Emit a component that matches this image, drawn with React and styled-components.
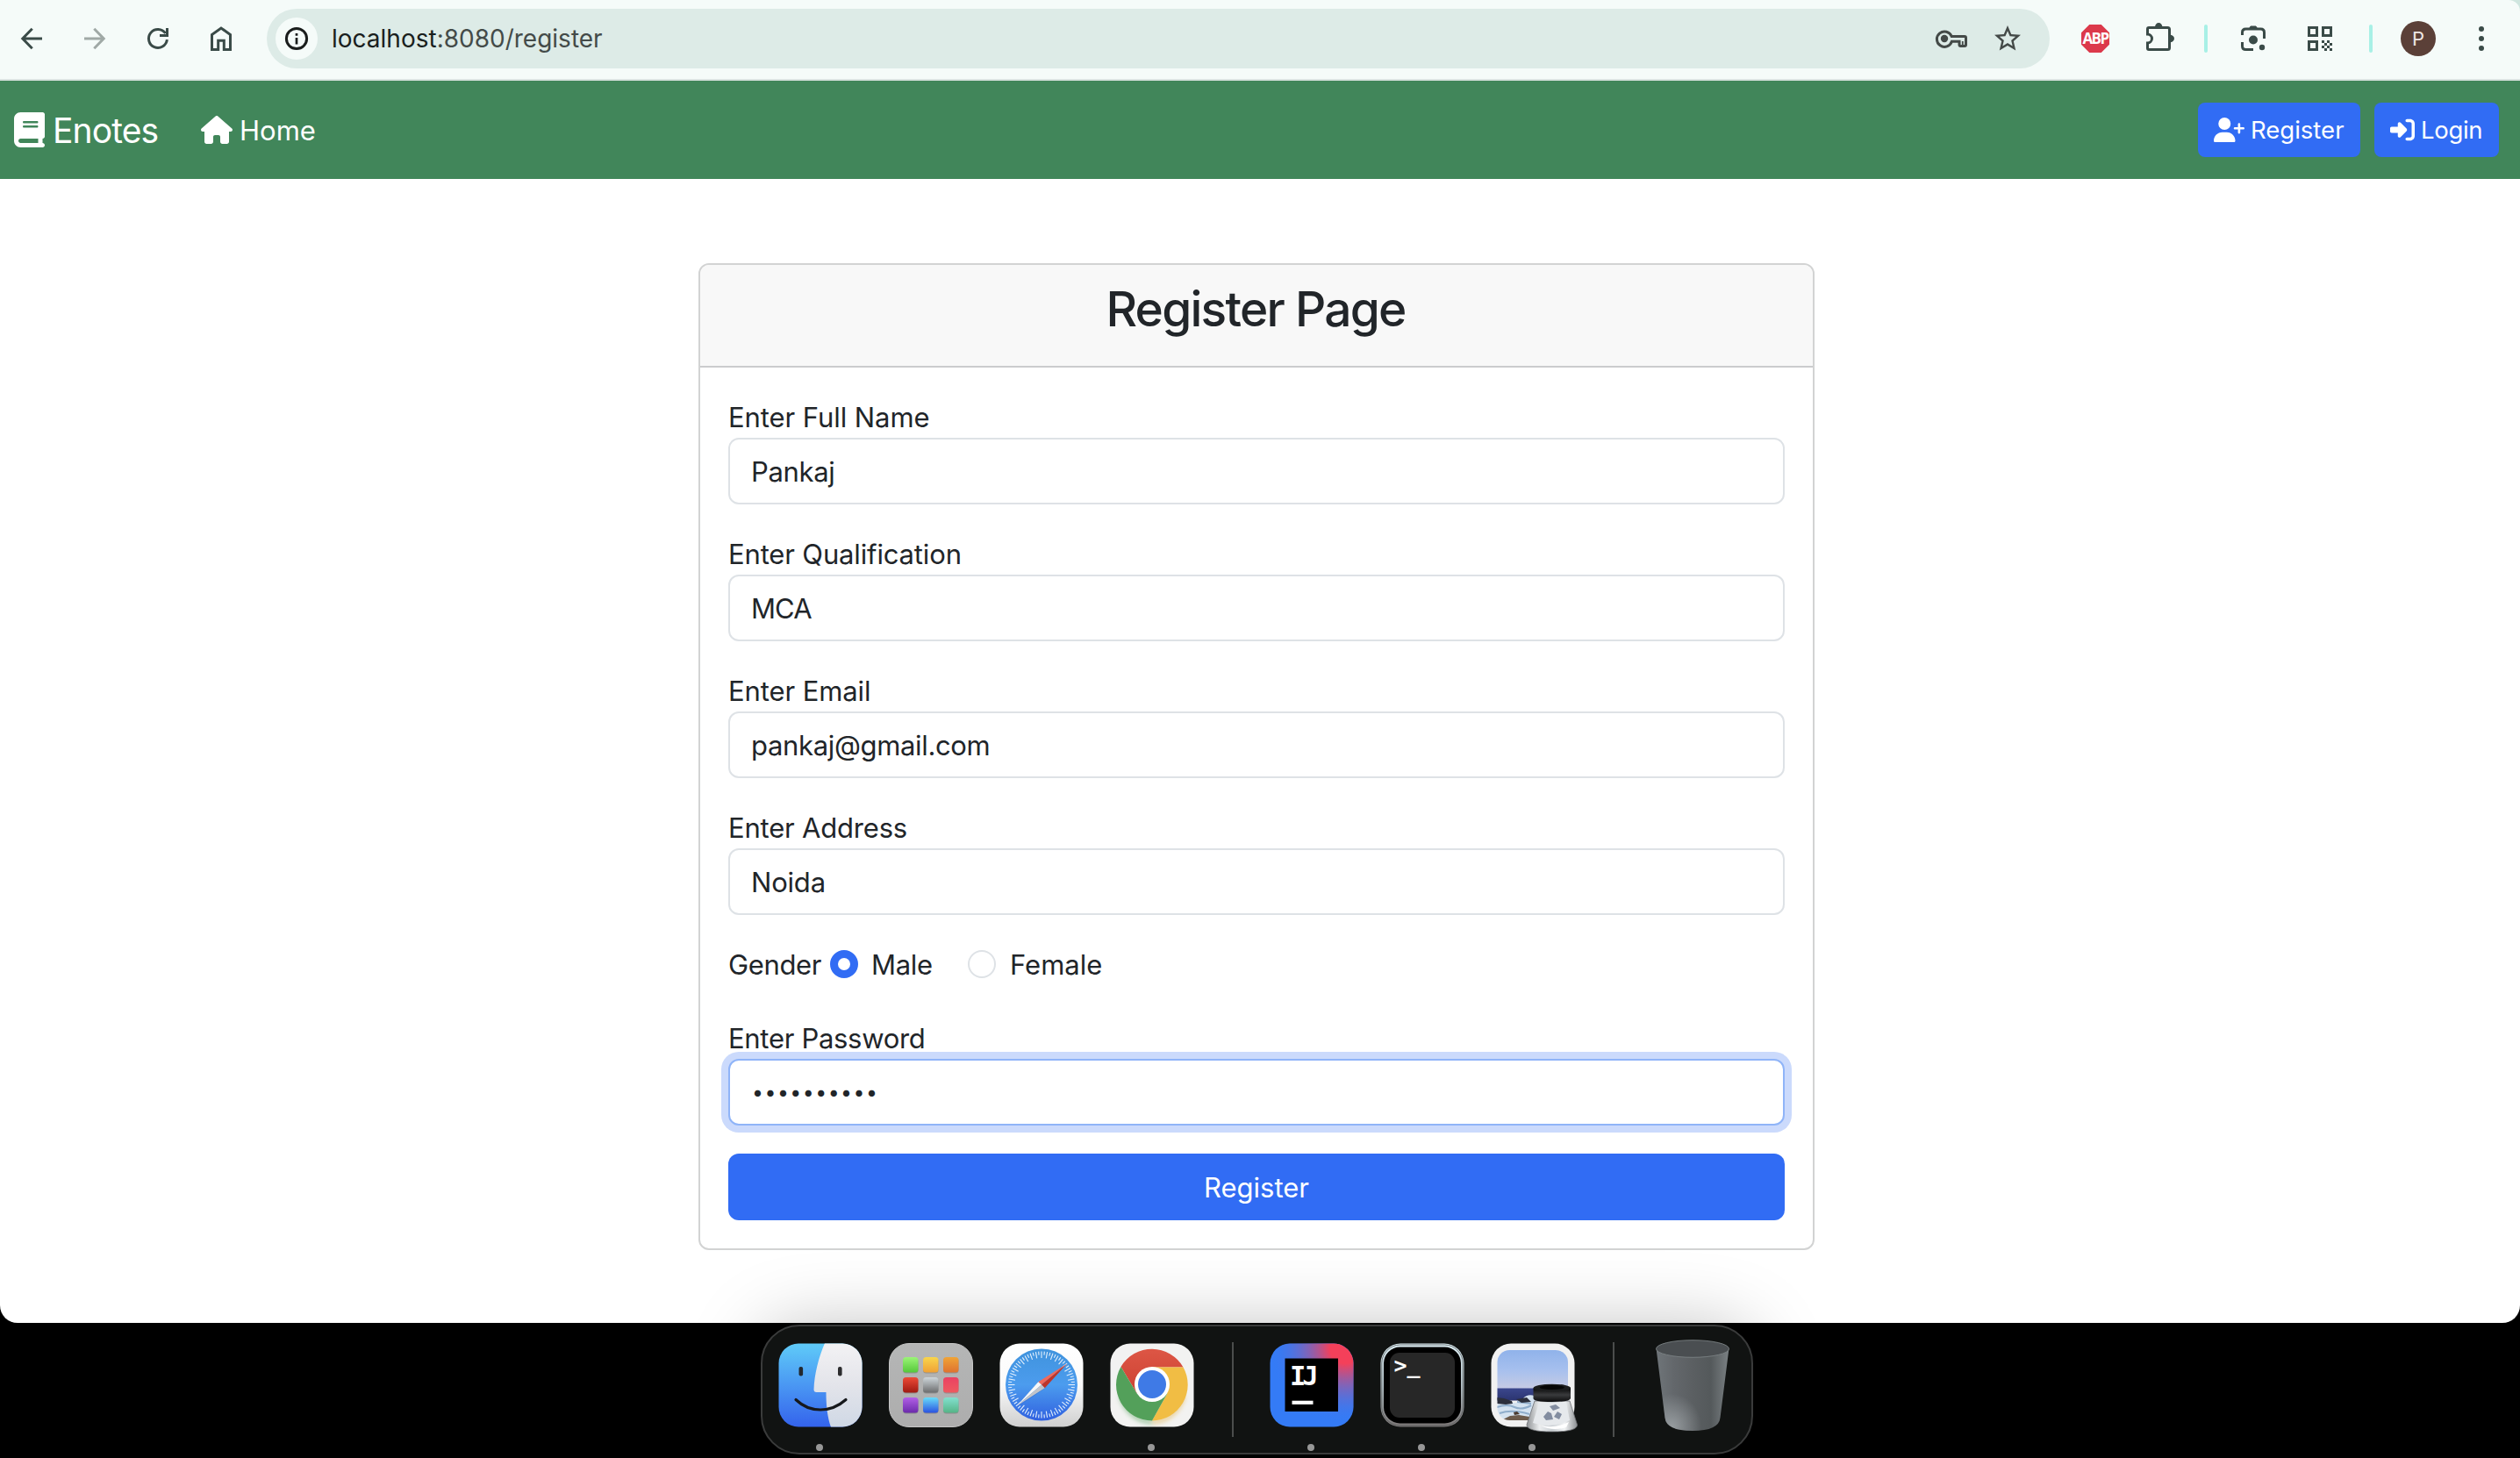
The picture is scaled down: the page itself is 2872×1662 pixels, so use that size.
import React from "react";
import styled, { createGlobalStyle } from "styled-components";
import { FaBook, FaHouse, FaUserPlus, FaRightToBracket } from "react-icons/fa6";
import { MdStarBorder } from "react-icons/md";

const Global = createGlobalStyle`
  *, *::before, *::after { box-sizing: border-box; }
  body { margin: 0; background: #000; font-family: Inter, "Liberation Sans", sans-serif; }
  svg { display: block; flex: none; overflow: visible; }
`;

const Desktop = styled.div`
  width: 2872px;
  height: 1662px;
  display: flex;
  flex-direction: column;
  background: #000;
  overflow: hidden;
`;

const Window = styled.div`
  height: 1508px;
  flex: none;
  display: flex;
  flex-direction: column;
  background: #fff;
  border-radius: 0 0 20px 20px;
  overflow: hidden;
`;

/* Browser toolbar */
const ToolbarFrame = styled.div`
  background: #cfe6df;
  flex: none;
`;
const Toolbar = styled.div`
  height: 92px;
  display: flex;
  align-items: center;
  padding-left: 16px;
  padding-bottom: 2px;
  background: #f5fbf9;
  border-bottom: 2px solid #dbe4e1;
  border-radius: 0 13px 0 0;
  color: #3a4b48;
`;
const NavButtons = styled.div`
  display: flex;
  gap: 32px;
  margin-right: 32px;
`;
const AddressBar = styled.div`
  width: 2032px;
  height: 68px;
  display: flex;
  align-items: center;
  padding: 0 30px 0 10px;
  border-radius: 34px;
  background: #ddebe7;
  color: #444a48;
`;
const SiteInfo = styled.div`
  width: 48px;
  height: 48px;
  display: grid;
  place-items: center;
  border-radius: 50%;
  background: #f5fbf9;
  color: #1a1d1c;
`;
const Url = styled.div`
  flex: 1;
  margin-left: 16px;
  font-size: 28px;
  line-height: 48px;
  color: #444b49;
  b { font-weight: 400; color: #1a1f1e; }
`;
const Slot = styled.div`
  margin-left: ${(p) => p.$ml}px;
  flex: none;
`;
const Divider = styled(Slot)`
  width: 4px;
  height: 32px;
  border-radius: 2px;
  background: #a8f0e6;
`;
const Avatar = styled(Slot)`
  width: 40px;
  height: 40px;
  border-radius: 50%;
  background: #5b4038;
  color: #eee7e4;
  font-size: 22px;
  line-height: 40px;
  text-align: center;
`;
const Abp = styled(Slot)`
  width: 32px;
  height: 32px;
  background: #dc394b;
  clip-path: polygon(29% 0, 71% 0, 100% 29%, 100% 71%, 71% 100%, 29% 100%, 0 71%, 0 29%);
  color: #fff;
  font: 700 17px/32px "Open Sans", "Noto Sans", sans-serif;
  letter-spacing: -1.6px;
  text-align: center;
`;

/* Site navbar */
const Navbar = styled.nav`
  height: 112px;
  flex: none;
  display: flex;
  align-items: center;
  padding: 0 24px 0 16px;
  background: #41865a;
  color: #fff;
`;
const Brand = styled.div`
  display: flex;
  align-items: center;
  gap: 9px;
  width: 213px;
  font-size: 39px;
  line-height: 60px;
  letter-spacing: -0.9px;
`;
const BookGlyph = styled(FaBook)`
  width: 35px;
  height: 40px;
`;
const HouseGlyph = styled(FaHouse)`
  width: 36px;
  height: 32px;
`;
const UserPlusGlyph = styled(FaUserPlus)`
  width: 35px;
  height: 28px;
`;
const NavText = styled.span`
  padding-top: 2px;
`;
const NavLink = styled.div`
  flex: 1;
  display: flex;
  align-items: center;
  gap: 8px;
  font-size: 31px;
  line-height: 48px;
`;
const NavButton = styled.button`
  height: 62px;
  width: ${(p) => p.$w}px;
  display: flex;
  align-items: center;
  gap: 7px;
  margin-left: 16px;
  padding: 0 0 0 18px;
  border: 0;
  border-radius: 8px;
  background: #316cf4;
  color: #fff;
  font: 400 27.5px/42px Inter, sans-serif;
  letter-spacing: ${(p) => p.$track || 0}px;
`;

/* Registration form */
const Content = styled.main`
  flex: 1;
  padding: 96px 0 0 796px;
`;
const Card = styled.section`
  width: 1272px;
  border: 2px solid #d2d3d3;
  border-radius: 12px;
  background: #fff;
  overflow: hidden;
  color: #212529;
`;
const CardHeader = styled.header`
  height: 117px;
  padding: 17px 2px 0 0;
  border-bottom: 2px solid #cbcccd;
  background: #f8f8f8;
`;
const Title = styled.h3`
  margin: 0;
  font-size: 55px;
  line-height: 67px;
  font-weight: 500;
  letter-spacing: -1.75px;
  text-align: center;
`;
const CardBody = styled.form`
  padding: 32px;
`;
const Field = styled.div`
  margin-bottom: 32px;
  display: flex;
  flex-direction: column;
`;
const Label = styled.label`
  padding-top: 2px;
  font-size: 31px;
  line-height: 46px;
  letter-spacing: ${(p) => p.$track || 0}px;
`;
const Input = styled.input`
  height: 76px;
  padding: 0 24px;
  border: 2px solid ${(p) => (p.$active ? "#8fb4f8" : "#dee2e6")};
  border-radius: 12px;
  outline: none;
  background: #fff;
  color: #212529;
  font: 400 31px/48px Inter, sans-serif;
  letter-spacing: ${(p) => p.$track || 0}px;
  box-shadow: ${(p) => (p.$active ? "0 0 0 8px #cbdafc" : "none")};
  &[type="password"] { font-size: 23px; letter-spacing: 1.5px; padding-left: 25px; }
`;
const GenderRow = styled.div`
  display: flex;
  align-items: center;
  height: 48px;
  margin-bottom: 36px;
`;
const GenderName = styled(Label)`
  width: 116px;
`;
const Choice = styled.label`
  display: flex;
  align-items: center;
  gap: ${(p) => p.$gap || 16}px;
  width: 157px;
  font-size: 31px;
  line-height: 46px;
  letter-spacing: ${(p) => p.$track || 0}px;
`;
const Radio = styled.span`
  width: 32px;
  height: 32px;
  flex: none;
  border-radius: 50%;
  background: #fff;
  border: ${(p) => (p.$checked ? "9px solid #316cf4" : "2px solid #dee2e6")};
`;
const Submit = styled.button`
  width: 100%;
  height: 76px;
  display: block;
  padding: 1px 0 0;
  border: 0;
  border-radius: 12px;
  background: #316cf4;
  color: #fff;
  font: 400 31px/48px Inter, sans-serif;
`;

/* Dock */
const DockArea = styled.div`
  flex: 1;
  padding: 2px 0 0 867px;
`;
const Dock = styled.div`
  position: relative;
  width: 1131px;
  height: 148px;
  display: flex;
  gap: 30px;
  padding: 19px 0 0 18px;
  border: 2px solid #3a3b3b;
  border-radius: 44px;
  background: #111312;
  box-shadow: 0 0 0 1px #000, 0 4px 84px rgba(0, 0, 0, 0.26);
`;
const DockItem = styled.div`
  display: flex;
  flex-direction: column;
  align-items: center;
  gap: 19px;
  width: ${(p) => p.$w || 96}px;
  margin: ${(p) => p.$m || 0};
`;
const RunningDot = styled.span`
  width: 8px;
  height: 8px;
  margin-right: 2px;
  border-radius: 50%;
  background: #979797;
`;
const Separator = styled.span`
  width: 2px;
  height: 108px;
  margin: -1px 11px 0 13px;
  background: #4b4d4c;
`;

const Line = ({ children, size = 40, ...rest }) => (
  <svg width={size} height={size} viewBox={`0 0 ${size} ${size}`} fill="none" stroke="currentColor" strokeWidth="3" {...rest}>
    {children}
  </svg>
);

const BackIcon = () => (
  <Line><path d="M20.7 8.8 9.8 20l10.9 11.2M10 20h22" /></Line>
);
const ForwardIcon = () => (
  <Line stroke="#a0a9a6"><path d="M19.3 8.8 30.2 20 19.3 31.2M30 20H8" /></Line>
);
const ReloadIcon = () => (
  <Line><path d="M30.4 21.2A10.5 10.5 0 1 1 28.6 14M30.5 8v8.5H22" /></Line>
);
const HomeIcon = () => (
  <Line><path d="M9.5 32.5v-17L20 8l10.5 7.5v17h-7.2V22.2h-6.6V32.5Z" /></Line>
);
const InfoIcon = () => (
  <Line size={28}>
    <circle cx="14" cy="14" r="11.6" />
    <path d="M14 13v7.5M14 8v2.8" strokeWidth="2.7" />
  </Line>
);
const KeyIcon = () => (
  <Line>
    <path d="M20.4 23.3A8.7 8.7 0 1 1 20.2 17.5H35q1.5 0 1.5 1.5v8q0 1.5-1.5 1.5h-4.5q-1.5 0-1.5-1.5V23.3Z" />
    <circle cx="12" cy="20" r="4.2" fill="currentColor" stroke="none" />
    <path d="M32.8 23v4.5" strokeWidth="1.8" />
  </Line>
);
const PuzzleIcon = () => (
  <Line>
    <path d="M5.5 15V9Q5.5 7.5 7 7.5H28.5Q30.5 7.5 30.5 9.5V30.5Q30.5 32.5 28.5 32.5H7Q5.5 32.5 5.5 31V25A5 5 0 0 0 5.5 15Z" />
    <path d="M14 7a4.2 5 0 0 1 8.4 0ZM31 15.8a5 4.2 0 0 1 0 8.4Z" fill="currentColor" stroke="none" />
  </Line>
);
const LensIcon = () => (
  <Line>
    <path d="M7.5 16v-3q0-4 4-4h17q4 0 4 4v7M7.5 24v4.5q0 4 4 4h8.5" />
    <path d="M15.5 8.5 17 6h6l1.5 2.5Z" fill="currentColor" strokeWidth="1" />
    <circle cx="20" cy="21.5" r="5" fill="currentColor" stroke="none" />
    <circle cx="30" cy="30" r="3.2" fill="currentColor" stroke="none" />
  </Line>
);
const QR_CELLS = [0, 1, 2, 3].flatMap((r) => [r % 2, (r % 2) + 2].map((c) => [22 + c * 3, 22 + r * 3]));
const QrIcon = () => (
  <Line>
    <path d="M7.5 7.5h9v9h-9ZM23.5 7.5h9v9h-9ZM7.5 23.5h9v9h-9Z" />
    {QR_CELLS.map(([x, y]) => (
      <rect key={`${x}-${y}`} x={x} y={y} width="3" height="3" fill="currentColor" stroke="none" />
    ))}
  </Line>
);
const MenuIcon = () => (
  <Line fill="currentColor" stroke="none">
    <circle cx="20" cy="9" r="3" />
    <circle cx="20" cy="20" r="3" />
    <circle cx="20" cy="31" r="3" />
  </Line>
);

const Gradient = ({ id, stops, ...rest }) => (
  <linearGradient id={id} x1="0" y1="0" x2="0" y2="1" {...rest}>
    {stops.map((c, i) => (
      <stop key={i} offset={i / (stops.length - 1)} stopColor={c} />
    ))}
  </linearGradient>
);
const AppIcon = ({ children }) => (
  <svg width="96" height="96" viewBox="0 0 96 96">{children}</svg>
);
const Tile = (props) => <rect x="0.5" y="0.5" width="95" height="95" rx="22.5" {...props} />;

const FinderIcon = () => (
  <AppIcon>
    <defs>
      <Gradient id="fBlue" stops={["#5fcbf8", "#4a97f3", "#3463ec"]} />
      <Gradient id="fFace" stops={["#f3f2f4", "#e3e4ea", "#cfd8e5"]} />
      <clipPath id="fClip"><Tile /></clipPath>
    </defs>
    <Tile fill="url(#fBlue)" />
    <path clipPath="url(#fClip)" d="M53 0C46 16 41 36 40.5 53q0 3 3 3H54.5C54.5 72 56 84 60 96H96V0Z" fill="url(#fFace)" />
    <rect x="23.5" y="27" width="4.6" height="10.5" rx="2" fill="#23282e" />
    <rect x="68" y="27" width="4.6" height="10.5" rx="2" fill="#2c2c2e" />
    <path d="M20 64.5Q32 76 48 76T77 64.5" fill="none" stroke="#16181b" strokeWidth="3.2" strokeLinecap="round" />
  </AppIcon>
);

const LAUNCH = [
  ["#9bf477", "#55c83a"], ["#f8d54c", "#efa136"], ["#efa437", "#df7230"],
  ["#ee4a36", "#9f1a12"], ["#ced6da", "#6c6d6e"], ["#ea4163", "#ee5a5f"],
  ["#b25fe6", "#6b2bab"], ["#68dcf9", "#2a52e0"], ["#83e0cf", "#55b487"],
];
const LaunchpadIcon = () => (
  <AppIcon>
    <defs>
      {LAUNCH.map((stops, i) => <Gradient key={i} id={`lp${i}`} stops={stops} />)}
      <Gradient id="lpBg" stops={["#b5b6b6", "#adadad"]} />
    </defs>
    <Tile fill="url(#lpBg)" stroke="#c6c6c6" strokeWidth="1" />
    {LAUNCH.map((_, i) => (
      <g key={i}>
        <rect x={16 + (i % 3) * 23} y={17 + Math.floor(i / 3) * 23} width="17.5" height="17.5" rx="3.5" fill="#000" opacity="0.18" />
        <rect x={16 + (i % 3) * 23} y={16 + Math.floor(i / 3) * 23} width="17.5" height="17.5" rx="3.5" fill={`url(#lp${i})`} />
      </g>
    ))}
  </AppIcon>
);

const TICKS = Array.from({ length: 72 }, (_, i) => i * 5);
const SafariIcon = () => (
  <AppIcon>
    <defs>
      <Gradient id="sBg" stops={["#ffffff", "#fafafa", "#cfcfcf"]} />
      <Gradient id="sDisc" stops={["#3f93dd", "#4c9cee", "#3061e0"]} />
    </defs>
    <Tile fill="url(#sBg)" />
    <circle cx="48" cy="47.5" r="41" fill="url(#sDisc)" />
    {TICKS.map((a, i) => (
      <path key={a} d={i % 2 ? "M48 9.5v4" : "M48 9.5v7.5"} transform={`rotate(${a} 48 47.5)`} stroke="#e4f0fc" strokeWidth="1.1" />
    ))}
    <path d="M20 73 47 54 54 50Z" fill="#1d3f8f" opacity="0.35" />
    <path d="M77 23.5 44.3 44.3 48 47.5Z" fill="#f0695c" />
    <path d="M77 23.5 51.7 51.2 48 47.5Z" fill="#bf3529" />
    <path d="M20 71.5 44.3 44.3 48 47.5Z" fill="#f7f7f7" />
    <path d="M20 71.5 51.7 51.2 48 47.5Z" fill="#c2c4c9" />
  </AppIcon>
);

const ChromeIcon = () => (
  <AppIcon>
    <defs>
      <Gradient id="cRed" stops={["#dd5645", "#cc4132"]} />
      <filter id="cBlur" x="-20%" y="-20%" width="140%" height="140%"><feGaussianBlur stdDeviation="2.5" /></filter>
    </defs>
    <Tile fill="#f2f2f1" />
    <path d="M12.5 60A38 38 0 0 0 48 90" fill="none" stroke="#53a05a" strokeWidth="5" filter="url(#cBlur)" opacity="0.5" />
    <path d="M48 90A38 38 0 0 0 84 60" fill="none" stroke="#e0b04a" strokeWidth="5" filter="url(#cBlur)" opacity="0.5" />
    <path d="M12.5 27 30.7 57.5 48 47.5V27.5H83.5A41 41 0 0 0 12.5 27Z" fill="url(#cRed)" />
    <path d="M83.5 27.5H48V47.5L65.3 57.5 48 88.5A41 41 0 0 0 83.5 27.5Z" fill="#f1bd44" />
    <path d="M48 88.5 65.3 57.5 48 47.5 30.7 57.5 12.5 27A41 41 0 0 0 48 88.5Z" fill="#53a05a" />
    <circle cx="48" cy="47" r="20" fill="#fff" />
    <circle cx="48" cy="47" r="16" fill="#3f7ae6" />
  </AppIcon>
);

const IdeaIcon = () => (
  <AppIcon>
    <defs>
      <radialGradient id="ijRed" cx="0.9" cy="0.06" r="0.9">
        <stop offset="0.2" stopColor="#f4405a" />
        <stop offset="1" stopColor="#347bf6" stopOpacity="0" />
      </radialGradient>
    </defs>
    <Tile fill="#347bf6" />
    <Tile fill="url(#ijRed)" />
    <rect x="17.5" y="17.5" width="60.5" height="60.5" fill="#000" />
    <text x="23" y="48.3" fill="#fff" fontFamily="DejaVu Sans Mono" fontWeight="700" fontSize="30.5" letterSpacing="-4">IJ</text>
    <rect x="25.5" y="65.7" width="24" height="4.2" fill="#fff" />
  </AppIcon>
);

const TerminalIcon = () => (
  <AppIcon>
    <defs><Gradient id="tEdge" stops={["#dff1f7", "#b5c3c9", "#7b7675"]} /></defs>
    <Tile fill="url(#tEdge)" />
    <rect x="1.8" y="2" width="92.4" height="92" rx="21" fill="none" stroke="#55595b" strokeWidth="0.8" />
    <rect x="4" y="4.5" width="88" height="87" rx="18.5" fill="#000" />
    <rect x="11" y="11" width="74" height="74" rx="11" fill="#272727" />
    <text x="15.5" y="33.5" fill="#fff" fontFamily="DejaVu Sans Mono" fontWeight="700" fontSize="25">&gt;_</text>
  </AppIcon>
);

const PreviewIcon = () => (
  <AppIcon>
    <defs>
      <Gradient id="pSky" stops={["#8fb2ea", "#a5bfee", "#c6cbe4"]} />
      <Gradient id="pSea" stops={["#3b478d", "#2b3470"]} />
      <Gradient id="pGlass" x2="1" y2="0" stops={["#8f9295", "#eceeef", "#c9ced2", "#f2f4f5", "#8b8e91"]} />
      <Gradient id="pCap" stops={["#050505", "#3a3b3d", "#0b0b0c"]} />
      <clipPath id="pClip"><rect x="7.5" y="8" width="80.5" height="80" rx="14" /></clipPath>
    </defs>
    <Tile fill="#f1f1f1" />
    <g clipPath="url(#pClip)">
      <rect x="7" y="7" width="82" height="45" fill="url(#pSky)" />
      <rect x="7" y="51.5" width="82" height="14" fill="url(#pSea)" />
      <path d="M7 70q9-7 16-3t14-4 20 1l33-2v28H7Z" fill="#d4e2f0" />
      <path d="M7 73q12-4 20 0t19-2M10 80q14-5 34 1M30 67l16 2" fill="none" stroke="#8fadcb" strokeWidth="2" />
      <path d="M7 62l8 1 9 3 1 3-8 1-10-1ZM29 64l12-2 5 5-11 1Z" fill="#2c2f3c" />
      <path d="M14 87l8-4 10-1 12 2v6H14Z" fill="#6d5b4c" />
      <path d="M26 79l4-1 3 3-6 1Z" fill="#4b3b30" />
    </g>
    <path d="M50 66 41 93Q41 101 70 101T98.5 93L90 66Z" fill="url(#pGlass)" stroke="#6d7073" strokeWidth="0.8" />
    <path d="M55 68 48 91q22 7 42-3L86 68Z" fill="#e6e9ec" />
    <path d="M60 84l5-6 4 2 2 7-8 1ZM72 84l4-6 5 3-3 6ZM67 72l7-2 5 4-8 3Z" fill="#838da0" />
    <path d="M57 94q16 4 32-4l-3 6q-16 5-29-2Z" fill="#fff" />
    <path d="M48.5 51v12q0 4 21 4t21.5-4V51Z" fill="url(#pCap)" />
    <ellipse cx="69.8" cy="51" rx="21.2" ry="4.3" fill="#1c1d1e" />
    <ellipse cx="69.8" cy="50.5" rx="14" ry="2.5" fill="#060606" />
  </AppIcon>
);

const TrashIcon = () => (
  <svg width="84" height="104" viewBox="0 0 84 104">
    <defs>
      <Gradient id="trBody" x2="1" y2="0" stops={["#6f7579", "#63676b", "#5b5f62", "#54595b", "#7b8184"]} />
      <radialGradient id="trGlow" cx="0.22" cy="0.95" r="0.4">
        <stop offset="0" stopColor="#a3a9ac" stopOpacity="0.8" />
        <stop offset="1" stopColor="#a3a9ac" stopOpacity="0" />
      </radialGradient>
    </defs>
    <path d="M0.5 10 10.5 89Q12 104 42 104T73.5 89L83.5 10Z" fill="url(#trBody)" />
    <path d="M0.5 10 10.5 89Q12 104 42 104T73.5 89L83.5 10Z" fill="url(#trGlow)" />
    <ellipse cx="42" cy="10.5" rx="41.5" ry="9.8" fill="#4a4e51" stroke="#7c8285" strokeWidth="0.9" />
  </svg>
);

const FIELDS = [
  { label: "Enter Full Name", labelTrack: -0.07, value: "Pankaj", track: -0.35 },
  { label: "Enter Qualification", labelTrack: -0.15, value: "MCA", track: -0.9 },
  { label: "Enter Email", labelTrack: -0.1, value: "pankaj@gmail.com", track: -0.34 },
  { label: "Enter Address", labelTrack: -0.2, value: "Noida", track: -0.2 },
];

const DOCK_ITEMS = [
  { Icon: FinderIcon, running: true },
  { Icon: LaunchpadIcon },
  { Icon: SafariIcon },
  { Icon: ChromeIcon, running: true },
  null,
  { Icon: IdeaIcon, running: true },
  { Icon: TerminalIcon, running: true },
  { Icon: PreviewIcon, running: true },
  null,
  { Icon: TrashIcon, width: 84, margin: "-4px 0 0 6px" },
];

export default function App() {
  return (
    <Desktop>
      <Global />
      <Window>
        <ToolbarFrame>
          <Toolbar>
            <NavButtons>
              <BackIcon />
              <ForwardIcon />
              <ReloadIcon />
              <HomeIcon />
            </NavButtons>
            <AddressBar>
              <SiteInfo><InfoIcon /></SiteInfo>
              <Url><b>localhost</b>:8080/register</Url>
              <KeyIcon />
              <Slot $ml={26}><MdStarBorder size={36} /></Slot>
            </AddressBar>
            <Abp $ml={36}>ABP</Abp>
            <Slot $ml={38}><PuzzleIcon /></Slot>
            <Divider $ml={30} />
            <Slot $ml={32}><LensIcon /></Slot>
            <Slot $ml={36}><QrIcon /></Slot>
            <Divider $ml={36} />
            <Avatar $ml={32}>P</Avatar>
            <Slot $ml={32}><MenuIcon /></Slot>
          </Toolbar>
        </ToolbarFrame>
        <Navbar>
          <Brand><BookGlyph /><NavText>Enotes</NavText></Brand>
          <NavLink><HouseGlyph /><NavText>Home</NavText></NavLink>
          <NavButton $w={185}><UserPlusGlyph />Register</NavButton>
          <NavButton $w={142} $track={-0.3}><FaRightToBracket size={28} />Login</NavButton>
        </Navbar>
        <Content>
          <Card>
            <CardHeader><Title>Register Page</Title></CardHeader>
            <CardBody>
              {FIELDS.map((f) => (
                <Field key={f.label}>
                  <Label $track={f.labelTrack}>{f.label}</Label>
                  <Input type="text" defaultValue={f.value} $track={f.track} />
                </Field>
              ))}
              <GenderRow>
                <GenderName $track={-0.35}>Gender</GenderName>
                <Choice $track={-0.3} $gap={15}><Radio $checked /><NavText>Male</NavText></Choice>
                <Choice><Radio /><NavText>Female</NavText></Choice>
              </GenderRow>
              <Field>
                <Label $track={-0.3}>Enter Password</Label>
                <Input type="password" defaultValue="0123456789" $active />
              </Field>
              <Submit type="button">Register</Submit>
            </CardBody>
          </Card>
        </Content>
      </Window>
      <DockArea>
        <Dock>
          {DOCK_ITEMS.map((item, i) =>
            item ? (
              <DockItem key={i} $w={item.width} $m={item.margin}>
                <item.Icon />
                {item.running && <RunningDot />}
              </DockItem>
            ) : (
              <Separator key={i} />
            )
          )}
        </Dock>
      </DockArea>
    </Desktop>
  );
}
